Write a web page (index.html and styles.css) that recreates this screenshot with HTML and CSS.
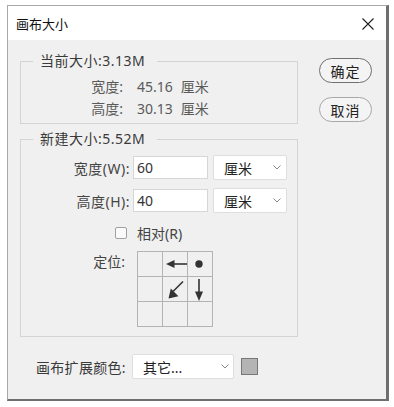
FILE: index.html
```
<!DOCTYPE html>
<html lang="zh-CN">
    <head>
        <meta charset="UTF-8">
        <meta name="viewport" content="width=device-width, initial-scale=1.0">
        <title>画布大小</title>
        <link rel="stylesheet" href="styles.css">
    </head>
    <body>
        <div class="dialog">
            <div class="titlebar">
                <span class="title">画布大小</span>
                <svg class="close" width="12" height="12" viewBox="0 0 12 12">
                    <path d="M0.5 0.5 L11.5 11.5 M11.5 0.5 L0.5 11.5" stroke="#222" stroke-width="1.1" fill="none"/>
                </svg>
            </div>
            <div class="content">
                <div class="left">
                    <fieldset class="group" id="current">
                        <legend>当前大小:3.13M</legend>
                        <div class="info-row">
                            <span class="info-label">宽度:</span>
                            <span class="info-value">45.16</span>
                            <span class="info-unit">厘米</span>
                        </div>
                        <div class="info-row">
                            <span class="info-label">高度:</span>
                            <span class="info-value">30.13</span>
                            <span class="info-unit">厘米</span>
                        </div>
                    </fieldset>

                    <fieldset class="group" id="newsize">
                        <legend>新建大小:5.52M</legend>
                        <div class="field-row">
                            <label class="field-label" for="w">宽度(W):</label>
                            <input class="num" type="text" id="w" value="60">
                            <div class="dropdown unit">
                                <span>厘米</span>
                                <svg width="8" height="5" viewBox="0 0 8 5"><path d="M0.5 0.5 L4 4 L7.5 0.5" stroke="#888" fill="none"/></svg>
                            </div>
                        </div>
                        <div class="field-row second">
                            <label class="field-label" for="h">高度(H):</label>
                            <input class="num" type="text" id="h" value="40">
                            <div class="dropdown unit">
                                <span>厘米</span>
                                <svg width="8" height="5" viewBox="0 0 8 5"><path d="M0.5 0.5 L4 4 L7.5 0.5" stroke="#888" fill="none"/></svg>
                            </div>
                        </div>
                        <div class="check-row">
                            <span class="checkbox"></span>
                            <span>相对(R)</span>
                        </div>
                        <div class="anchor-row">
                            <span class="anchor-label">定位:</span>
                            <div class="anchor">
                                <div class="cell"></div>
                                <div class="cell">
                                    <svg width="24" height="24" viewBox="0 0 24 24">
                                        <path d="M10 12 L24 12" stroke="#333" stroke-width="1.6"/>
                                        <path d="M3 12 L11.5 8 L11.5 16 Z" fill="#333"/>
                                    </svg>
                                </div>
                                <div class="cell">
                                    <svg width="24" height="24" viewBox="0 0 24 24">
                                        <circle cx="11" cy="12" r="3.7" fill="#333"/>
                                    </svg>
                                </div>
                                <div class="cell"></div>
                                <div class="cell">
                                    <svg width="24" height="24" viewBox="0 0 24 24">
                                        <path d="M20 4.5 L10 14.5" stroke="#333" stroke-width="1.6"/>
                                        <path d="M5.5 21.5 L7.8 11.6 L15.4 19.2 Z" fill="#333"/>
                                    </svg>
                                </div>
                                <div class="cell">
                                    <svg width="24" height="24" viewBox="0 0 24 24">
                                        <path d="M11 2 L11 16" stroke="#333" stroke-width="1.6"/>
                                        <path d="M11 24 L7 14.5 L15 14.5 Z" fill="#333"/>
                                    </svg>
                                </div>
                                <div class="cell"></div>
                                <div class="cell"></div>
                                <div class="cell"></div>
                            </div>
                        </div>
                    </fieldset>

                    <div class="extend-row">
                        <span class="extend-label">画布扩展颜色:</span>
                        <div class="dropdown color-select">
                            <span>其它...</span>
                            <svg width="8" height="5" viewBox="0 0 8 5"><path d="M0.5 0.5 L4 4 L7.5 0.5" stroke="#888" fill="none"/></svg>
                        </div>
                        <span class="swatch"></span>
                    </div>
                </div>
                <div class="buttons">
                    <button class="btn default">确定</button>
                    <button class="btn">取消</button>
                </div>
            </div>
        </div>
    </body>
</html>
```

FILE: styles.css
```
* {
    box-sizing: border-box;
}
body {
    margin: 0;
    background-color: #fff;
    font-family: "Noto Sans", "Noto Sans CJK SC", sans-serif;
    font-size: 14px;
    color: #444;
}
.dialog {
    margin: 5px 0 0 7px;
    width: 382px;
    height: 396px;
    border-top: 1px solid #a8a8a8;
    border-left: 1px solid #a8a8a8;
    border-right: 3px solid #6e6e6e;
    border-bottom: 2px solid #6e6e6e;
    background-color: #f0f0f0;
}
.titlebar {
    height: 34px;
    background-color: #fff;
    display: flex;
    align-items: center;
    justify-content: space-between;
    padding: 1px 12px 0 8px;
}
.title {
    color: #111;
    font-size: 13px;
}
.content {
    display: flex;
    padding: 12px 0 0 12px;
}
.left {
    width: 278px;
}
.group {
    margin: 0;
    padding: 0;
    border: 1px solid #d4d4d4;
}
.group legend {
    margin-left: 12px;
    padding: 0 12px 0 7px;
    font-size: 14px;
    line-height: 18px;
    letter-spacing: 0.5px;
    color: #3a3a3a;
}
#current {
    padding: 5px 0 4px 0;
}
.info-row {
    display: flex;
    height: 22px;
    align-items: center;
    color: #5a5a5a;
}
.info-label {
    width: 102px;
    text-align: right;
}
.info-value {
    margin-left: 14px;
}
.info-unit {
    margin-left: 8px;
}
#newsize {
    margin-top: 6px;
    padding: 7px 0 9px 0;
}
.field-row {
    display: flex;
    align-items: center;
    height: 25px;
}
.field-row.second {
    margin-top: 8px;
}
.field-label {
    width: 109px;
    margin-right: 3px;
    text-align: right;
    letter-spacing: 0.5px;
}
.num {
    width: 75px;
    height: 23px;
    border: 1px solid #d6d6d6;
    background-color: #fff;
    padding: 0 3px;
    font-family: "Noto Sans", "Noto Sans CJK SC", sans-serif;
    font-size: 14px;
    color: #333;
    outline: none;
}
.dropdown {
    display: flex;
    align-items: center;
    justify-content: space-between;
    height: 25px;
    border: 1px solid #dedede;
    border-radius: 2px;
    background-color: #fff;
    color: #222;
}
.unit {
    width: 74px;
    margin-left: 5px;
    padding: 0 5px 0 10px;
}
.check-row {
    display: flex;
    align-items: center;
    height: 18px;
    margin-top: 11px;
    padding-left: 94px;
}
.checkbox {
    width: 12px;
    height: 12px;
    border: 1px solid #a0a0a0;
    border-radius: 2px;
    background-color: #fafafa;
    margin-right: 10px;
}
.anchor-row {
    display: flex;
    margin-top: 9px;
}
.anchor-label {
    width: 104px;
    margin-right: 12px;
    margin-top: 2px;
    text-align: right;
    line-height: 18px;
}
.anchor {
    display: grid;
    grid-template-columns: repeat(3, 24px);
    grid-template-rows: repeat(3, 24px);
    gap: 1px;
    padding: 1px;
    background-color: #b4b4b4;
}
.cell {
    background-color: #f0f0f0;
}
.cell svg {
    display: block;
}
.extend-row {
    display: flex;
    align-items: center;
    margin-top: 17px;
    padding-left: 16px;
    color: #3a3a3a;
}
.extend-label {
    width: 96px;
    letter-spacing: 0.3px;
}
.color-select {
    width: 102px;
    padding: 0 4px 0 10px;
}
.swatch {
    width: 17px;
    height: 17px;
    margin-left: 7px;
    border: 1px solid #777;
    background-color: #b4b4b4;
}
.buttons {
    display: flex;
    flex-direction: column;
    margin-left: 21px;
    padding-top: 6px;
}
.btn {
    width: 53px;
    height: 25px;
    border: 1px solid #a8a8a8;
    border-radius: 13px;
    background-color: #f4f4f4;
    font-family: "Noto Sans", "Noto Sans CJK SC", sans-serif;
    font-size: 14px;
    letter-spacing: 1px;
    color: #222;
    padding: 0;
    margin-bottom: 14px;
}
.btn.default {
    border: 1.5px solid #707070;
}
```
